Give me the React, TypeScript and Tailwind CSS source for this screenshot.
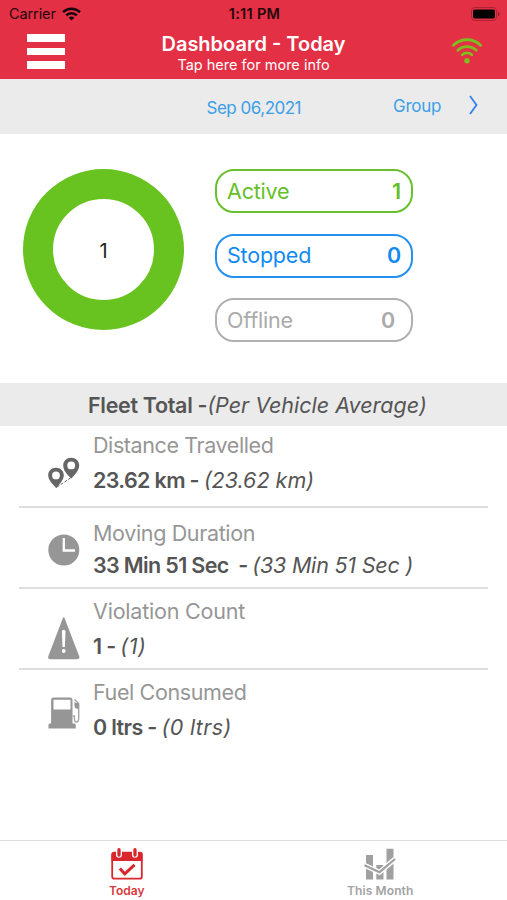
import type { ReactNode } from 'react';

type StatusPillProps = {
  label: string;
  value: number;
  className: string;
};

type MetricRowProps = {
  icon: ReactNode;
  label: string;
  total: string;
  average: string;
  className: string;
  labelClassName: string;
  valueClassName: string;
  last?: boolean;
};

function WifiIcon() {
  return (
    <svg width="19" height="14" viewBox="0 0 19 14" fill="none" stroke="#16060a" strokeWidth="2.5">
      <path d="M1 5.1a12.2 12.2 0 0 1 17 0" />
      <path d="M4.2 8.3a7.6 7.6 0 0 1 10.6 0" />
      <path d="M9.5 13.6 6.6 10.7a4.3 4.3 0 0 1 5.8 0Z" fill="#16060a" stroke="none" />
    </svg>
  );
}

function SignalIcon() {
  return (
    <svg
      width="30"
      height="28"
      viewBox="0 0 30 28"
      fill="none"
      stroke="#7cc01f"
      strokeWidth="2.8"
      strokeLinecap="round"
    >
      <path d="M1.5 8.2a19.5 19.5 0 0 1 27 0" />
      <path d="M5.8 13.2a13.5 13.5 0 0 1 18.400 0" />
      <path d="M10.2 17.8a7.2 7.2 0 0 1 9.6 0" />
      <circle cx="15" cy="23.8" r="2.7" fill="#7cc01f" stroke="none" />
    </svg>
  );
}

function BatteryIcon() {
  return (
    <svg width="29" height="14" viewBox="0 0 29 14">
      <rect x="0.5" y="0.5" width="25" height="13" rx="3.5" fill="none" stroke="#a92335" />
      <rect x="2" y="2.5" width="22" height="9" rx="2" fill="#000" />
      <path d="M27 4.5v5q1.5-1 1.5-2.5T27 4.5Z" fill="#8f1d2c" />
    </svg>
  );
}

function PinsIcon() {
  return (
    <svg width="32" height="32" viewBox="0 0 32 32">
      <path d="M9 30 24 20" stroke="#666" strokeWidth="1" strokeDasharray="3 1.5" />
      <path
        fill="#666"
        fillRule="evenodd"
        d="M23.2.8c4.600 0 8 3.300 8 7.700 0 5-4.500 9-7.700 13-4-3.500-8.300-8-8.300-13C15.200 4.100 18.600.8 23.200.8Zm0 3.700a3.900 3.900 0 1 0 0 7.800 3.900 3.900 0 0 0 0-7.800Z"
      />
      <path
        fill="#666"
        fillRule="evenodd"
        d="M8 10.800c4.700 0 7.800 3.200 7.800 7.500 0 5-4.300 8.500-7.500 13C4.500 26.800.2 23.300.2 18.300.2 14 3.300 10.800 8 10.800Zm0 3.700a3.900 3.900 0 1 0 0 7.800 3.900 3.900 0 0 0 0-7.800Z"
      />
    </svg>
  );
}

function ClockIcon() {
  return (
    <svg width="32" height="32" viewBox="0 0 32 32">
      <circle cx="15.800" cy="16" r="15.500" fill="#969696" />
      <path d="M15.800 4v12.500H27" fill="none" stroke="#fff" strokeWidth="2.300" />
    </svg>
  );
}

function WarningIcon() {
  return (
    <svg width="32" height="44" viewBox="0 0 32 44">
      <path
        d="M15.700 2 30.500 40.500q.5 2-1.500 2H2.500q-2 0-1.500-2Z"
        fill="#969696"
        stroke="#969696"
        strokeWidth="1.500"
        strokeLinejoin="round"
      />
      <path d="M13.900 15.500q0-1.700 1.800-1.700t1.800 1.700L16.900 31h-2.400Z" fill="#fff" />
      <circle cx="15.700" cy="35" r="1.900" fill="#fff" />
    </svg>
  );
}

function FuelIcon() {
  return (
    <svg width="32" height="32" viewBox="0 0 32 32">
      <path
        fill="#969696"
        fillRule="evenodd"
        d="M5.500.5h16.600q2.400 0 2.400 2.400V26.500h1.800q1.400 0 1.400 1.400V31.500H.5v-3.600q0-1.400 1.400-1.400h1.200V2.900Q3.100.5 5.500.5ZM5.500 2.700v9.700h17V2.700Z"
      />
      <path
        d="M26.500 2.500 30.700 6.500V21q0 4-2.300 4-2 0-2-3.500v-2.500h-1.700"
        fill="none"
        stroke="#a3a3a3"
        strokeWidth="1.400"
      />
      <path d="M26.500 5.200 30.700 6.500v5.500q-4.200 0-4.200-3Z" fill="#969696" />
    </svg>
  );
}

function CalendarIcon() {
  return (
    <svg width="32" height="32" viewBox="0 0 32 32">
      <rect x="1.200" y="4.700" width="29.600" height="26" rx="2" fill="#fff" stroke="#d9272e" strokeWidth="1.800" />
      <path d="M.5 13V6q0-2 2-2h27q2 0 2 2v7Z" fill="#d9272e" />
      <g stroke="#fff" strokeWidth="6" strokeLinecap="round">
        <path d="M8 3v3.800M24 3v3.800" />
      </g>
      <g stroke="#d9272e" strokeWidth="3.300" strokeLinecap="round">
        <path d="M8 1.700v5.300M24 1.700v5.300" />
      </g>
      <path d="m8.800 20.500 5 5.300L23.500 16.800" fill="none" stroke="#d9272e" strokeWidth="3" />
    </svg>
  );
}

function MonthChartIcon() {
  return (
    <svg width="32" height="32" viewBox="0 0 32 32">
      <path d="M2 7h7v24.500H2ZM12.300 17h7.200v14.500h-7.200ZM22.500.8h7v30.700h-7Z" fill="#a0a0a0" />
      <path d="m1 17.500 14.500 6.800L31 11" fill="none" stroke="#fff" strokeWidth="5" />
      <path d="m.5 17.300 15 6.900L31 11" fill="none" stroke="#a0a0a0" strokeWidth="2.200" />
    </svg>
  );
}

function StatusPill({ label, value, className }: StatusPillProps) {
  return (
    <div
      className={`flex h-11 w-[198px] items-center justify-between rounded-[19px] border-2 pl-[10px] text-[21.500px] tracking-[-0.2px] ${className}`}
    >
      <span>{label}</span>
      <span className="font-semibold">{value}</span>
    </div>
  );
}

function MetricRow({
  icon,
  label,
  total,
  average,
  className,
  labelClassName,
  valueClassName,
  last,
}: MetricRowProps) {
  return (
    <div className={`mx-[19px] flex pl-[29px] ${last ? '' : 'border-b-2 border-[#dedede]'} ${className}`}>
      <div className="w-[45px] shrink-0">{icon}</div>
      <div className="flex flex-col text-[21.500px] leading-7 whitespace-pre">
        <span className={`text-[#969696] ${labelClassName}`}>{label}</span>
        <span className={`text-[#555] ${valueClassName}`}>
          <b className="font-semibold tracking-[-0.65px]">{total}</b>
          <i>{average}</i>
        </span>
      </div>
    </div>
  );
}

export default function App() {
  return (
    <div className="flex h-[900px] w-[507px] flex-col overflow-hidden bg-white font-['Inter',sans-serif]">
      <header className="h-[79px] bg-[#e33045]">
        <div className="grid h-[27px] grid-cols-3 items-center pr-[7px] pl-[9px] text-[14.500px] text-[#24070c]">
          <div className="flex items-center gap-[6px]">
            <span className="tracking-[-0.1px]">Carrier</span>
            <WifiIcon />
          </div>
          <span className="text-center font-semibold tracking-[0.3px]">1:11 PM</span>
          <div className="flex justify-end">
            <BatteryIcon />
          </div>
        </div>
        <div className="grid grid-cols-[38px_1fr_38px] pr-[27px] pl-[27px]">
          <div className="flex flex-col gap-[6px] pt-[7px]">
            <div className="h-[8px] bg-white" />
            <div className="h-[7px] bg-white" />
            <div className="h-[8px] bg-white" />
          </div>
          <div className="flex flex-col items-center text-white">
            <h1 className="pt-[5px] text-[20px] leading-6 font-semibold">Dashboard - Today</h1>
            <p className="text-[14.500px] leading-[18px]">Tap here for more info</p>
          </div>
          <div className="pt-[10px] pl-[10px]">
            <SignalIcon />
          </div>
        </div>
      </header>

      <div className="flex h-[55px] justify-end bg-[#ebebeb] pr-[29px] text-[17px] leading-6 text-[#3a9fe8]">
        <span className="mr-[92px] pt-[17px] tracking-[-0.5px]">Sep 06,2021</span>
        <span className="mr-[28px] pt-[15px] tracking-[-0.3px]">Group</span>
        <svg className="mt-4" width="9" height="20" viewBox="0 0 9 20" fill="none" stroke="#3182f0" strokeWidth="1.800">
          <path d="m1 1 6.500 9L1 19" />
        </svg>
      </div>

      <section className="flex h-[249px] gap-[31px] pt-[35px] pl-[23px]">
        <div className="flex size-[161px] items-center justify-center rounded-full border-[30.500px] border-[#68c321] pt-[2px] text-[20px] text-[#222]">
          1
        </div>
        <div className="flex flex-col gap-[20.500px]">
          <StatusPill label="Active" value={1} className="border-[#68c02c] pr-[10px] text-[#64bf28]" />
          <StatusPill label="Stopped" value={0} className="border-[#2490ef] pr-[10px] text-[#118af0]" />
          <StatusPill label="Offline" value={0} className="border-[#b0b0b0] pr-[16px] text-[#aaa]" />
        </div>
      </section>

      <h2 className="h-[43px] bg-[#ebebeb] pt-px pl-[88px] text-[21.500px] leading-[43px] font-normal whitespace-nowrap text-[#555]">
        <b className="font-semibold tracking-[-0.32px]">Fleet Total -</b>
        <i>(Per Vehicle Average)</i>
      </h2>

      <section className="flex-1">
        <MetricRow
          icon={<PinsIcon />}
          label="Distance Travelled"
          total="23.62 km - "
          average="(23.62 km)"
          className="h-[82px] pt-[5px] [&_svg]:mt-[26px]"
          labelClassName="tracking-[-0.4px]"
          valueClassName="mt-[7px]"
        />
        <MetricRow
          icon={<ClockIcon />}
          label="Moving Duration"
          total="33 Min 51 Sec  - "
          average="(33 Min 51 Sec )"
          className="h-[81px] pt-[11px] [&_svg]:mt-[15px]"
          labelClassName="tracking-[-0.35px]"
          valueClassName="mt-[4px] [&_i]:tracking-[-0.2px]"
        />
        <MetricRow
          icon={<WarningIcon />}
          label="Violation Count"
          total="1 - "
          average="(1)"
          className="h-[81px] pt-[8px] [&_svg]:mt-[19px]"
          labelClassName="tracking-[-0.2px]"
          valueClassName="mt-[7px] [&_i]:tracking-[0.5px]"
        />
        <MetricRow
          icon={<FuelIcon />}
          label="Fuel Consumed"
          total="0 ltrs - "
          average="(0 ltrs)"
          className="h-[81px] pt-[8px] [&_svg]:mt-[19px]"
          labelClassName="tracking-[-0.38px]"
          valueClassName="mt-[7px] [&_i]:tracking-[0.35px]"
          last
        />
      </section>

      <nav className="grid h-[60px] grid-cols-2 border-t border-[#ddd] text-[12px] leading-4 font-semibold">
        <div className="flex flex-col items-center gap-[3px] pt-[7px] text-[#d83a40]">
          <CalendarIcon />
          <span>Today</span>
        </div>
        <div className="flex flex-col items-center gap-[3px] pt-[7px] text-[#a3a3a3]">
          <MonthChartIcon />
          <span className="tracking-[0.1px]">This Month</span>
        </div>
      </nav>
    </div>
  );
}
